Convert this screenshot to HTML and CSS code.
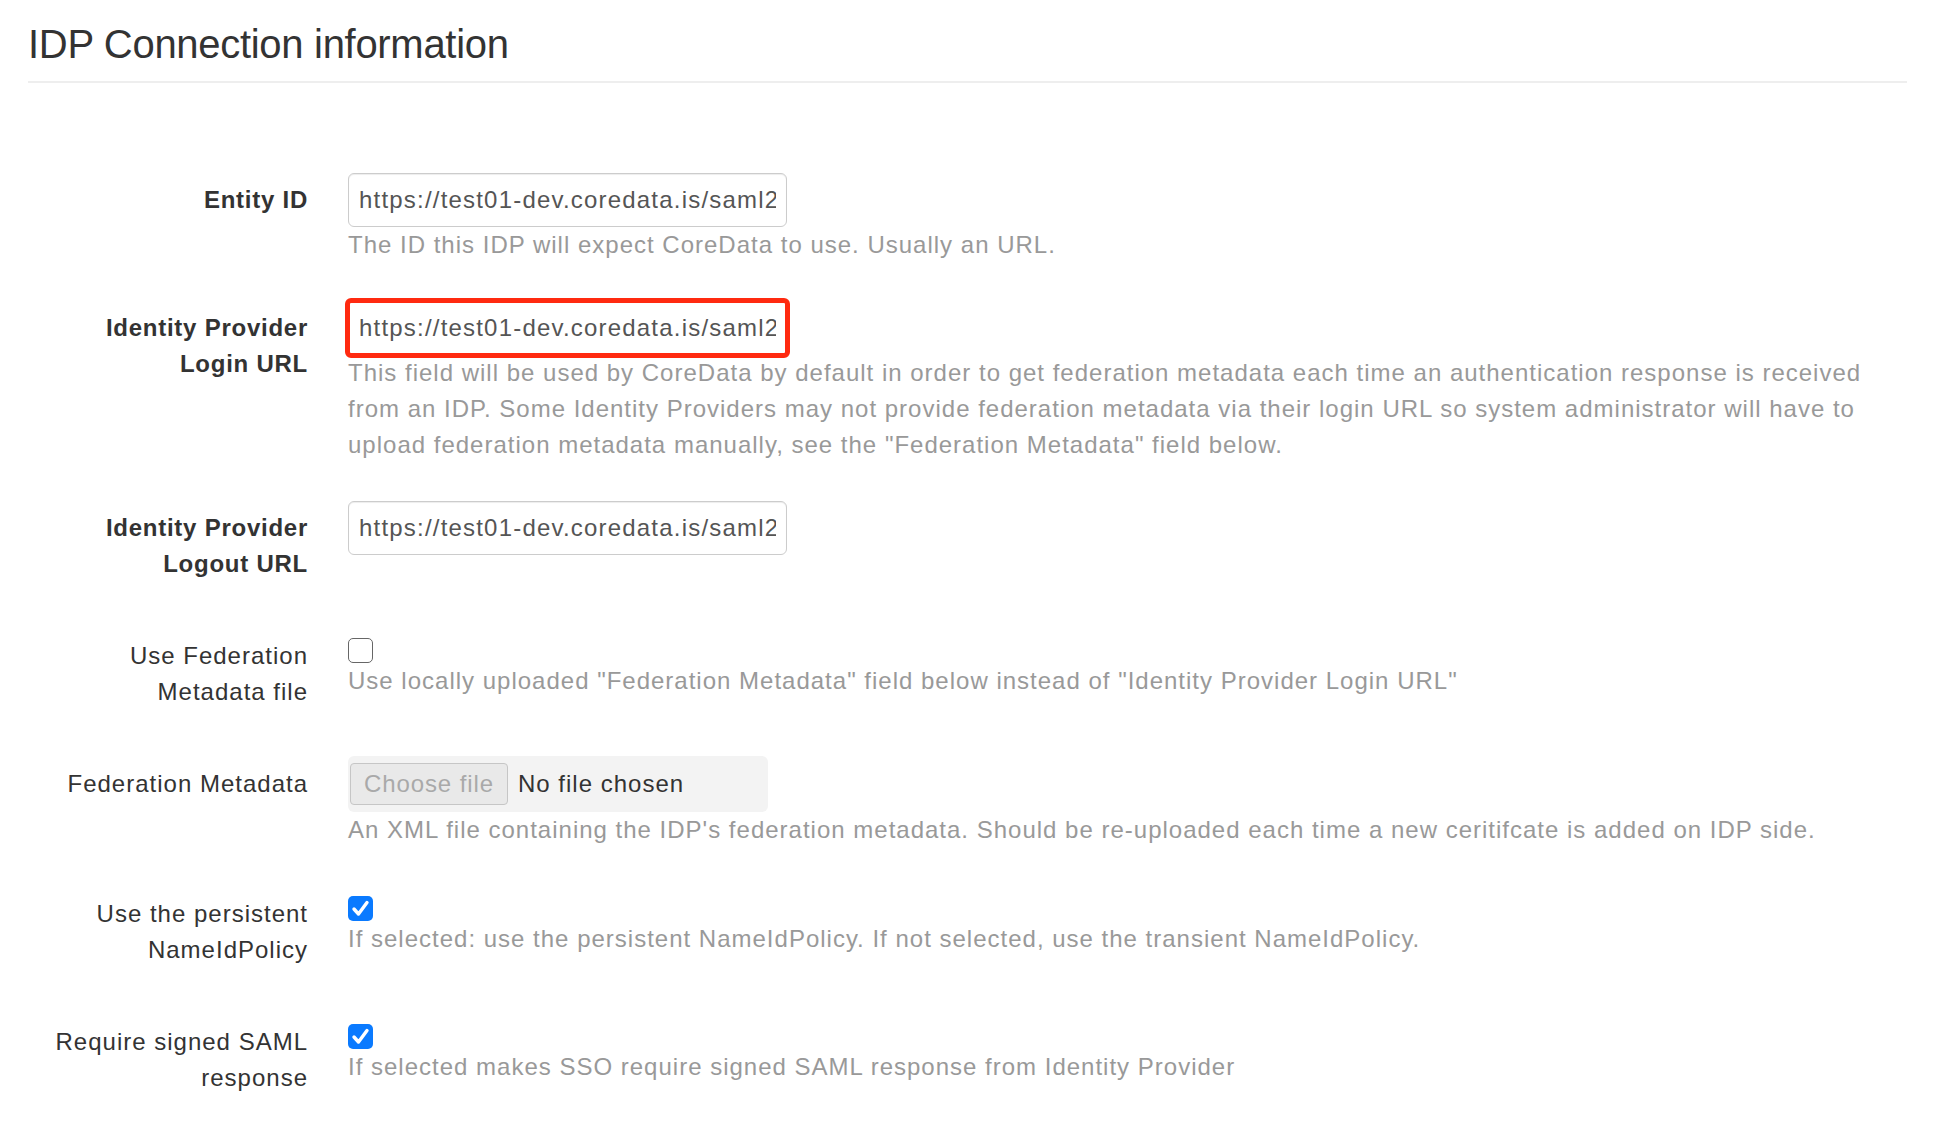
FILE: index.html
```html
<!DOCTYPE html>
<html lang="en">
<head>
  <meta charset="UTF-8">
  <meta name="viewport" content="width=device-width, initial-scale=1.0">
  <title>IDP Connection information</title>
  <link rel="stylesheet" href="styles.css">
</head>
<body>
  <h3 class="page-header">IDP Connection information</h3>

  <form class="idp-form">
    <div class="form-group">
      <label class="control-label required" for="entity-id">Entity ID</label>
      <div class="control">
        <input id="entity-id" class="text-input" type="text" value="https://test01-dev.coredata.is/saml2">
        <p class="help-block">The ID this IDP will expect CoreData to use. Usually an URL.</p>
      </div>
    </div>

    <div class="form-group">
      <label class="control-label required" for="login-url">Identity Provider Login URL</label>
      <div class="control">
        <input id="login-url" class="text-input highlight" type="text" value="https://test01-dev.coredata.is/saml2">
        <p class="help-block">This field will be used by CoreData by default in order to get federation metadata each time an authentication response is received from an IDP. Some Identity Providers may not provide federation metadata via their login URL so system administrator will have to upload federation metadata manually, see the "Federation Metadata" field below.</p>
      </div>
    </div>

    <div class="form-group">
      <label class="control-label required" for="logout-url">Identity Provider Logout URL</label>
      <div class="control">
        <input id="logout-url" class="text-input" type="text" value="https://test01-dev.coredata.is/saml2">
      </div>
    </div>

    <div class="form-group check-group">
      <label class="control-label">Use Federation Metadata file</label>
      <div class="control">
        <span class="checkbox"></span>
        <p class="help-block">Use locally uploaded "Federation Metadata" field below instead of "Identity Provider Login URL"</p>
      </div>
    </div>

    <div class="form-group file-group">
      <label class="control-label">Federation Metadata</label>
      <div class="control">
        <div class="file-input">
          <button type="button" class="file-btn" disabled>Choose file</button>
          <span class="file-name">No file chosen</span>
        </div>
        <p class="help-block">An XML file containing the IDP's federation metadata. Should be re-uploaded each time a new ceritifcate is added on IDP side.</p>
      </div>
    </div>

    <div class="form-group check-group">
      <label class="control-label">Use the persistent NameIdPolicy</label>
      <div class="control">
        <span class="checkbox checked">
          <svg width="25" height="25" viewBox="0 0 25 25"><path d="M6 13 L10.5 18 L19 6.5" fill="none" stroke="#fff" stroke-width="3.4" stroke-linecap="round" stroke-linejoin="round"/></svg>
        </span>
        <p class="help-block">If selected: use the persistent NameIdPolicy. If not selected, use the transient NameIdPolicy.</p>
      </div>
    </div>

    <div class="form-group check-group">
      <label class="control-label">Require signed SAML response</label>
      <div class="control">
        <span class="checkbox checked">
          <svg width="25" height="25" viewBox="0 0 25 25"><path d="M6 13 L10.5 18 L19 6.5" fill="none" stroke="#fff" stroke-width="3.4" stroke-linecap="round" stroke-linejoin="round"/></svg>
        </span>
        <p class="help-block">If selected makes SSO require signed SAML response from Identity Provider</p>
      </div>
    </div>
  </form>
</body>
</html>
```

FILE: styles.css
```css
body {
  margin: 0;
  padding: 0 47px 40px 28px;
  font-family: "Liberation Sans", Arial, Helvetica, sans-serif;
  font-size: 24px;
  line-height: 36px;
  letter-spacing: 1px;
  color: #333;
  background-color: #fff;
}
.page-header {
  margin: 22px 0 90px;
  padding-bottom: 15px;
  border-bottom: 2px solid #eee;
  font-size: 40px;
  line-height: 44px;
  font-weight: normal;
  letter-spacing: -0.3px;
}
.idp-form {
  display: flex;
  flex-direction: column;
}
.form-group {
  display: grid;
  grid-template-columns: 262px 1fr;
  column-gap: 40px;
  padding-left: 18px;
  margin-bottom: 38px;
}
.control-label {
  text-align: right;
  padding-top: 9px;
}
.control-label.required {
  font-weight: bold;
  letter-spacing: 0.75px;
}
.control {
  padding-right: 15px;
}
.text-input {
  display: block;
  width: 439px;
  height: 54px;
  box-sizing: border-box;
  padding: 0 10px;
  border: 1px solid #ccc;
  border-radius: 6px;
  box-shadow: inset 0 1px 1px rgba(0, 0, 0, .075);
  font: inherit;
  letter-spacing: 1.2px;
  color: #555;
}
.text-input.highlight {
  outline: 5px solid #ff2a10;
  outline-offset: -2px;
  border-radius: 3px;
}
.help-block {
  margin: 0;
  color: #999;
}
.check-group {
  padding-top: 18px;
}
.check-group .control-label {
  padding-top: 0;
}
.checkbox {
  display: block;
  width: 25px;
  height: 25px;
  box-sizing: border-box;
  border: 1.5px solid #666;
  border-radius: 5px;
  background-color: #fff;
}
.checkbox.checked {
  border: none;
  background-color: #0a7aff;
}
.checkbox svg {
  display: block;
}
.file-group {
  margin-top: 8px;
  margin-bottom: 30px;
}
.file-group .control-label {
  padding-top: 10px;
}
.file-input {
  display: flex;
  align-items: center;
  width: 420px;
  height: 56px;
  box-sizing: border-box;
  padding-left: 2px;
  border-radius: 6px;
  background-color: #f3f3f3;
}
.file-btn {
  width: 158px;
  height: 42px;
  padding: 0;
  border: 1px solid #c6c6c6;
  border-radius: 4px;
  background-color: #e9e9e9;
  font: inherit;
  letter-spacing: 0.9px;
  color: #a9a9a9;
}
.file-name {
  margin-left: 10px;
  color: #333;
}
```
